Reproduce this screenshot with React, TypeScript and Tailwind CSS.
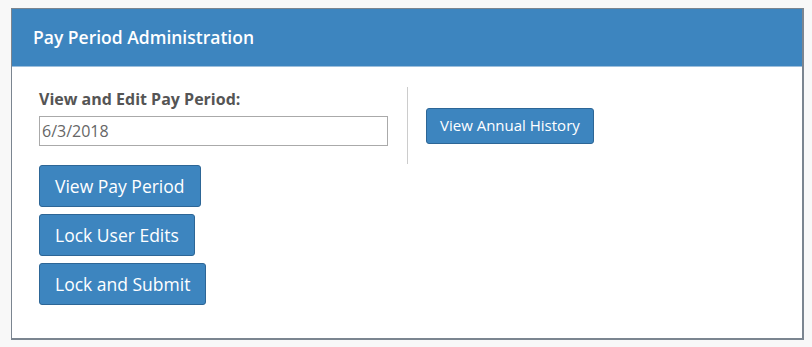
export default function App() {
  return (
    <div className="min-h-[347px] bg-[#f8f8f8] pt-[8px] pl-[11px] font-['Open_Sans',sans-serif]">
      <div className="w-[793px] border border-[#7b8590] border-r-2 border-b-2 bg-white">
        <div className="h-[58px] bg-[#3d85bf] border-b border-[#9dbfdc] flex items-center px-[21px]">
          <h1 className="text-[17.5px] font-semibold text-white">Pay Period Administration</h1>
        </div>
        <div className="pl-[27px] pt-[20px] pb-[33px]">
          <div className="flex">
            <div className="w-[368px] pr-[19px] pb-[18px]">
              <label className="block text-[16px] font-bold text-[#555] leading-[24px]">
                View and Edit Pay Period:
              </label>
              <input
                defaultValue="6/3/2018"
                className="mt-[5px] w-[349px] h-[30px] border border-[#aaa] px-[2px] text-[16px] text-[#666] outline-none"
              />
            </div>
            <div className="border-l border-[#ccc] pl-[18px] flex items-center">
              <button className="h-[36px] px-[13px] rounded-[3px] bg-[#3d85bf] border border-[#2d6696] text-white text-[15px]">
                View Annual History
              </button>
            </div>
          </div>
          <div className="flex flex-col items-start gap-[7px] mt-[1px]">
            <button className="h-[42px] px-[15px] rounded-[3px] bg-[#3d85bf] border border-[#2d6696] text-white text-[17.5px]">
              View Pay Period
            </button>
            <button className="h-[42px] px-[15px] rounded-[3px] bg-[#3d85bf] border border-[#2d6696] text-white text-[17.5px]">
              Lock User Edits
            </button>
            <button className="h-[42px] px-[15px] rounded-[3px] bg-[#3d85bf] border border-[#2d6696] text-white text-[17.5px]">
              Lock and Submit
            </button>
          </div>
        </div>
      </div>
    </div>
  )
}
